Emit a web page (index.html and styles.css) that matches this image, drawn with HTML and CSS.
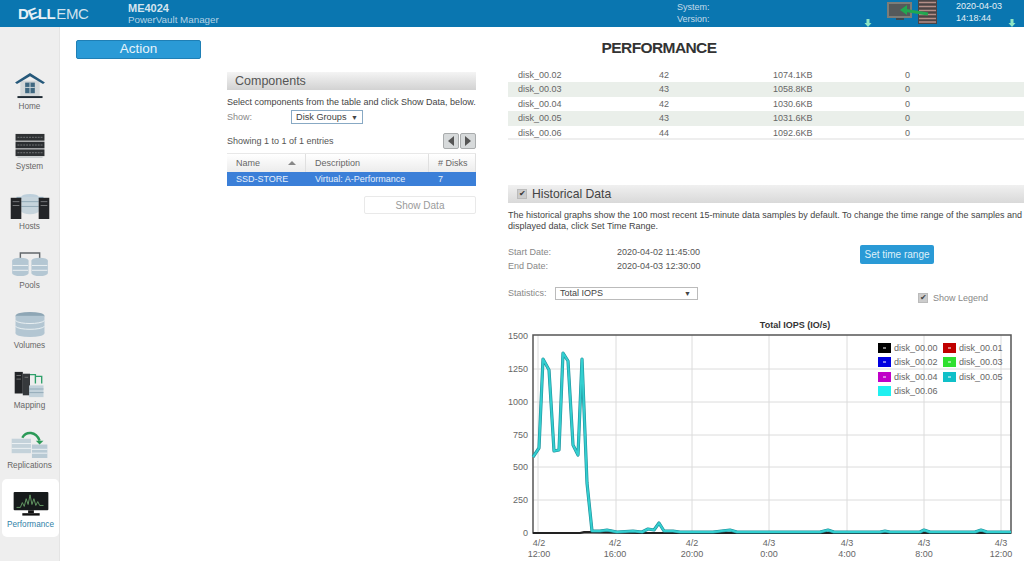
FILE: index.html
```html
<!DOCTYPE html>
<html lang="en">
<head>
<meta charset="utf-8">
<title>ME4024 PowerVault Manager</title>
<link rel="stylesheet" href="styles.css">
</head>
<body>
<header class="topbar">
  <div class="logo"><span class="logo-dell">D<span class="logo-e">E</span>LL</span><span class="logo-emc">EMC</span></div>
  <div class="product"><div class="product-name">ME4024</div><div class="product-sub">PowerVault Manager</div></div>
  <div class="sysinfo"><div>System:</div><div>Version:</div></div>
  <svg class="arrow arrow-a" viewBox="0 0 8 8"><path d="M2.500 0h3v4h2L4 8 .5 4h2z" fill="#8fe6c4"/></svg>
  <svg class="hw" viewBox="0 0 51 25">
    <rect x="0" y="2" width="25" height="16" fill="#7d7d78"/><rect x="2" y="4" width="21" height="12" fill="#55595a"/><rect x="9" y="18" width="8" height="2" fill="#3d4a52"/>
    <rect x="31" y="0" width="19" height="24" fill="#4d4444"/><path d="M32 2.500h17M32 6.500h17M32 10.500h17M32 14.500h17M32 18.500h17M32 22h17" stroke="#b58f88" stroke-width="1.300"/>
    <path d="M41 14 19 10.500" stroke="#22a850" stroke-width="3"/><path d="M20 5l-7 5 7 5z" fill="#22a850"/>
  </svg>
  <div class="clock"><div>2020-04-03</div><div>14:18:44</div></div>
  <svg class="arrow arrow-b" viewBox="0 0 8 8"><path d="M2.500 0h3v4h2L4 8 .5 4h2z" fill="#8fe6c4"/></svg>
</header>
<div class="page">
  <nav class="sidebar">
    <div class="nav-item">
      <svg class="nav-icon" viewBox="0 0 32 28"><rect x="6" y="9" width="20" height="17" fill="#d3d8d9"/><path d="M.5 11 16 1l15.500 10-2 1.500L16 4.500 2.500 12.500z" fill="#25587a"/><rect x="11" y="11" width="10" height="11" fill="#3f6880"/><path d="M16 11v11M11 16h10" stroke="#cfd8dc"/><rect x="3" y="25" width="26" height="2" fill="#1e2a33"/></svg>
      <span>Home</span>
    </div>
    <div class="nav-item">
      <svg class="nav-icon" viewBox="0 0 32 28"><rect x="1" y="2" width="30" height="7" fill="#2e3133"/><rect x="1" y="10" width="30" height="7" fill="#2a2d30"/><rect x="1" y="18" width="30" height="7" fill="#2e3133"/><path d="M3 5.500h26M3 13.500h26M3 21.500h26" stroke="#75787a" stroke-dasharray="2 1"/><rect x="3" y="25" width="26" height="2" fill="#c9cdcf"/></svg>
      <span>System</span>
    </div>
    <div class="nav-item">
      <svg class="nav-icon" viewBox="0 0 40 28"><path d="M6 6h28" stroke="#9fb7c7" stroke-width="2"/><ellipse cx="20" cy="5" rx="9" ry="3" fill="#bccfdb"/><rect x="11" y="5" width="18" height="15" fill="#c6d4dc"/><path d="M11 10h18M11 15h18" stroke="#8fa7b5"/><ellipse cx="20" cy="20" rx="9" ry="3" fill="#c6d4dc"/><rect x="0" y="6" width="11" height="22" fill="#232528"/><rect x="29" y="6" width="11" height="22" fill="#232528"/><path d="M2 10h7M31 10h7M2 14h7M31 14h7" stroke="#77797b"/></svg>
      <span>Hosts</span>
    </div>
    <div class="nav-item">
      <svg class="nav-icon" viewBox="0 0 38 28"><path d="M9 8V2h20v6" fill="none" stroke="#62676b" stroke-width="1.500"/><g fill="#b4c7d3"><ellipse cx="9" cy="10" rx="8.500" ry="3"/><rect x=".5" y="10" width="17" height="13"/><ellipse cx="9" cy="23" rx="8.500" ry="3"/><ellipse cx="29" cy="10" rx="8.500" ry="3"/><rect x="20.500" y="10" width="17" height="13"/><ellipse cx="29" cy="23" rx="8.500" ry="3"/></g><path d="M1 15h16M1 20h16M21 15h16M21 20h16" stroke="#edf2f4"/></svg>
      <span>Pools</span>
    </div>
    <div class="nav-item">
      <svg class="nav-icon" viewBox="0 0 34 28"><g fill="#b3c6d2"><ellipse cx="17" cy="5" rx="15" ry="4" fill="#8ea6b5"/><rect x="2" y="5" width="30" height="18"/><ellipse cx="17" cy="23" rx="15" ry="4"/></g><path d="M2 10c4 4 26 4 30 0M2 16c4 4 26 4 30 0" fill="none" stroke="#eaf0f3"/></svg>
      <span>Volumes</span>
    </div>
    <div class="nav-item">
      <svg class="nav-icon" viewBox="0 0 34 30"><rect x="0" y="1" width="9" height="24" fill="#222427"/><rect x="9" y="3" width="8" height="24" fill="#36393c"/><path d="M2 5h5M2 9h5M11 7h4" stroke="#777"/><rect x="16" y="16" width="16" height="13" fill="#c2d1da"/><path d="M16 20h16M16 24h16" stroke="#8fa7b5"/><path d="M17 4h6v10M23 6h7v8" fill="none" stroke="#2ea06a" stroke-width="1.500"/></svg>
      <span>Mapping</span>
    </div>
    <div class="nav-item">
      <svg class="nav-icon" viewBox="0 0 40 28"><rect x="1" y="8" width="20" height="15" fill="#c4d2da"/><path d="M1 13h20M1 18h20" stroke="#eef3f5"/><rect x="22" y="14" width="16" height="14" fill="#b9cad4"/><path d="M22 19h16M22 23h16" stroke="#eef3f5"/><path d="M12 7C16 0 26 0 30 10" fill="none" stroke="#2c9a58" stroke-width="2.500"/><path d="M26 10h8l-4 4z" fill="#2c9a58"/></svg>
      <span>Replications</span>
    </div>
    <div class="nav-item nav-active">
      <svg class="nav-icon" viewBox="0 0 36 28"><rect x="0" y="1" width="36" height="19" rx="1" fill="#161a1b"/><path d="M3 17h4l2-5 2 4 2-8 2 6 2-10 2 10 2-6 2 7 2-4 2 4h4" fill="none" stroke="#649a64"/><path d="M15 20h6v3h-6z" fill="#111"/><rect x="9" y="23" width="18" height="2.500" fill="#111"/></svg>
      <span>Performance</span>
    </div>
  </nav>
  <div class="action-col"><button class="btn-action">Action</button></div>
  <section class="components">
    <h2 class="section-head">Components</h2>
    <p class="hint">Select components from the table and click Show Data, below.</p>
    <div class="show-row"><span class="muted">Show:</span><span class="select-small">Disk Groups <i>▼</i></span></div>
    <div class="entries-row"><span>Showing 1 to 1 of 1 entries</span>
      <span class="pager"><span class="pager-btn"><b class="tri-l"></b></span><span class="pager-btn"><b class="tri-r"></b></span></span>
    </div>
    <div class="comp-table">
      <div class="comp-row comp-headrow"><span>Name<i class="sort"></i></span><span>Description</span><span># Disks</span></div>
      <div class="comp-row comp-sel"><span>SSD-STORE</span><span>Virtual: A-Performance</span><span>7</span></div>
    </div>
    <div class="show-wrap"><button class="btn-show">Show Data</button></div>
  </section>
  <main class="right">
    <h1 class="title">PERFORMANCE</h1>
    <div class="disk-table">
      <div class="disk-row"><span>disk_00.02</span><span>42</span><span>1074.1KB</span><span>0</span></div>
      <div class="disk-row alt"><span>disk_00.03</span><span>43</span><span>1058.8KB</span><span>0</span></div>
      <div class="disk-row"><span>disk_00.04</span><span>42</span><span>1030.6KB</span><span>0</span></div>
      <div class="disk-row alt"><span>disk_00.05</span><span>43</span><span>1031.6KB</span><span>0</span></div>
      <div class="disk-row"><span>disk_00.06</span><span>44</span><span>1092.6KB</span><span>0</span></div>
    </div>
    <h2 class="section-head hist-head"><span class="check">✔</span>Historical Data</h2>
    <p class="hist-text">The historical graphs show the 100 most recent 15-minute data samples by default. To change the time range of the samples and displayed data, click Set Time Range.</p>
    <div class="dates">
      <div class="date-grid">
        <span class="muted">Start Date:</span><span>2020-04-02 11:45:00</span>
        <span class="muted">End Date:</span><span>2020-04-03 12:30:00</span>
      </div>
      <button class="btn-range">Set time range</button>
    </div>
    <div class="stats">
      <span class="muted">Statistics:</span>
      <span class="select-wide">Total IOPS<i>▼</i></span>
      <span class="legend-toggle"><span class="check check-light">✔</span>Show Legend</span>
    </div>
    <svg class="chart" viewBox="500 318 524 243">
      <text x="795" y="328" class="chart-title">Total IOPS (IO/s)</text>
      <g class="grid">
        <path d="M533 369H1011M533 402H1011M533 435H1011M533 467H1011M533 500H1011"/>
        <path d="M538 335V533M616 335V533M692 335V533M769 335V533M847 335V533M924 335V533M1001 335V533"/>
      </g>
      <rect x="533" y="335" width="478" height="198" class="frame"/>
      <polyline class="line-dark" points="533,533 580,533 584,532 590,532 640,533 660,533 700,533 730,533 830,533 895,533 1011,533"/>
      <polyline class="line-under" points="533,457 539,448 543,359 549,370 554,451 559,450 563,353 568,361 573,445 578,455 582,359 587,483 592,531 600,531 607,530 617,532 633,531 642,532 648,529 654,530 659,523 664,531 673,531 680,532 713,532 730,530 737,532 760,532 820,532 828,530 834,532 880,532 885,531 890,532 920,532 924,530 930,532 975,532 981,530 987,532 1011,532"/>
      <polyline class="line-teal" points="533,457 539,448 543,359 549,370 554,451 559,450 563,353 568,361 573,445 578,455 582,359 587,483 592,531 600,531 607,530 617,532 633,531 642,532 648,529 654,530 659,523 664,531 673,531 680,532 713,532 730,530 737,532 760,532 820,532 828,530 834,532 880,532 885,531 890,532 920,532 924,530 930,532 975,532 981,530 987,532 1011,532"/>
      <g class="axis-y">
        <text x="528" y="339">1500</text><text x="528" y="372">1250</text><text x="528" y="405">1000</text><text x="528" y="438">750</text><text x="528" y="470">500</text><text x="528" y="503">250</text><text x="528" y="536">0</text>
      </g>
      <g class="axis-x">
        <text x="539" y="546">4/2</text><text x="539" y="557">12:00</text>
        <text x="615" y="546">4/2</text><text x="615" y="557">16:00</text>
        <text x="692" y="546">4/2</text><text x="692" y="557">20:00</text>
        <text x="769" y="546">4/3</text><text x="769" y="557">0:00</text>
        <text x="847" y="546">4/3</text><text x="847" y="557">4:00</text>
        <text x="924" y="546">4/3</text><text x="924" y="557">8:00</text>
        <text x="1001" y="546">4/3</text><text x="1001" y="557">12:00</text>
      </g>
      <g class="legend">
        <rect x="878" y="343" width="13" height="10" fill="#000"/><text x="894" y="351">disk_00.00</text>
        <rect x="943" y="343" width="13" height="10" fill="#c00000"/><text x="959" y="351">disk_00.01</text>
        <rect x="878" y="357" width="13" height="10" fill="#0000e0"/><text x="894" y="365">disk_00.02</text>
        <rect x="943" y="357" width="13" height="10" fill="#2fe02f"/><text x="959" y="365">disk_00.03</text>
        <rect x="878" y="372" width="13" height="10" fill="#c000c8"/><text x="894" y="380">disk_00.04</text>
        <rect x="943" y="372" width="13" height="10" fill="#10c0c8"/><text x="959" y="380">disk_00.05</text>
        <rect x="878" y="386" width="13" height="10" fill="#20f0f0"/><text x="894" y="394">disk_00.06</text>
      </g>
      <path class="legend-dash" d="M883 348h3M948 348h3M883 362h3M948 362h3M883 377h3M948 377h3"/>
    </svg>
  </main>
</div>
</body>
</html>
```
FILE: styles.css
```css
* { box-sizing: border-box; }
html, body { margin: 0; height: 561px; overflow: hidden; }
body { font-family: "Liberation Sans", Arial, sans-serif; font-size: 9px; color: #444; background: #fff; }
h1, h2, p { margin: 0; font-weight: normal; }
button { font-family: inherit; }

.topbar { position: relative; height: 27px; background: #0a76b0; color: #dbe9f2; display: flex; align-items: flex-start; }
.logo { width: 128px; padding: 5px 0 0 18px; font-size: 15px; line-height: 17px; white-space: nowrap; color: #cfe2ee; }
.logo-dell { font-weight: bold; letter-spacing: -0.5px; color: #e6f0f6; }
.logo-e { display: inline-block; transform: rotate(-22deg); }
.logo-emc { font-weight: normal; letter-spacing: -0.3px; margin-left: 1px; }
.product { width: 549px; padding-top: 2px; }
.product-name { font-size: 11px; line-height: 12px; font-weight: bold; color: #d5e4ee; }
.product-sub { font-size: 9.800px; line-height: 12px; color: #b4d2e4; }
.sysinfo { width: 187px; padding-top: 2px; font-size: 9px; line-height: 11.500px; color: #c4dbe9; }
.hw { width: 51px; height: 25px; margin: 0 0 0 23px; flex: none; filter: blur(0.4px); }
.clock { margin-left: 18px; font-size: 9px; line-height: 12px; color: #e5f0f6; width: 50px; }
.arrow { position: absolute; width: 8px; height: 8px; top: 19px; }
.arrow-a { left: 864px; }
.arrow-b { left: 1008px; }

.page { display: flex; height: 534px; }
.sidebar { width: 60px; background: #eeeeee; flex: none; border-right: 1px solid #e4e4e4; padding-top: 45px; }
.nav-item { height: 59.800px; display: flex; flex-direction: column; align-items: center; font-size: 8.200px; line-height: 10px; color: #666; }
.nav-icon { height: 27px; width: 42px; margin-bottom: 3px; display: block; flex: none; filter: blur(0.4px); }
.nav-active { background: #fff; color: #2f7fa8; width: 57px; height: 58px; margin: -12px 0 0 2px; padding-top: 12px; border-radius: 5px; }
.nav-active .nav-icon { margin-bottom: 2px; }

.action-col { width: 167px; flex: none; padding: 13px 0 0 16px; }
.btn-action { width: 125px; height: 19px; padding: 0 0 2px; background: #2a9ad6; border: 1px solid #1f7fb5; border-radius: 2px; color: #e6f3fa; font-size: 13.500px; line-height: 15px; }

.components { width: 249px; flex: none; padding-top: 45px; margin-right: 32px; }
.section-head { height: 18px; background: linear-gradient(#f4f4f4, #d2d2d2); font-size: 12.500px; line-height: 18px; padding-left: 8px; color: #555; }
.hint { margin-top: 7px; font-size: 9px; line-height: 11px; white-space: nowrap; color: #444; }
.show-row { display: flex; align-items: center; height: 14px; margin-top: 2px; }
.show-row .muted { width: 64px; }
.muted { color: #888; }
.select-small { width: 72px; height: 14px; border: 1px solid #88a9c4; padding-left: 4px; font-size: 9.200px; line-height: 12px; color: #444; background: #fff; white-space: nowrap; }
.select-small i { font-style: normal; font-size: 7px; margin-left: 2px; }
.entries-row { display: flex; justify-content: space-between; align-items: center; margin-top: 8px; height: 17px; color: #555; }
.pager { display: flex; gap: 1px; }
.pager-btn { width: 16px; height: 16px; background: #d7dadb; border: 1px solid #a9acad; border-radius: 2px; display: flex; align-items: center; justify-content: center; }
.tri-l { border-right: 6px solid #555; border-top: 5px solid transparent; border-bottom: 5px solid transparent; }
.tri-r { border-left: 6px solid #555; border-top: 5px solid transparent; border-bottom: 5px solid transparent; }
.comp-table { margin-top: 4px; }
.comp-row { display: grid; grid-template-columns: 79px 123px 47px; align-items: center; }
.comp-row span { padding-left: 9px; }
.comp-headrow { height: 19px; background: linear-gradient(#fff, #ececec); color: #666; border-top: 1px solid #e8e8e8; }
.comp-headrow span { position: relative; height: 100%; line-height: 18px; border-right: 1px solid #e0e0e0; }
.sort { position: absolute; right: 9px; top: 7px; border-bottom: 4px solid #888; border-left: 4px solid transparent; border-right: 4px solid transparent; }
.comp-sel { height: 14px; background: #3b7fd8; color: #e6effa; }
.show-wrap { display: flex; justify-content: flex-end; margin-top: 10px; }
.btn-show { width: 112px; height: 18px; background: #fff; border: 1px solid #e9e9e9; border-radius: 2px; color: #9a9a9a; font-size: 10px; padding: 0; }

.right { flex: 1; min-width: 0; }
.title { width: 302px; height: 41px; padding-top: 13px; text-align: center; font-size: 15.500px; line-height: 16px; font-weight: bold; letter-spacing: -0.6px; color: #333; white-space: nowrap; }
.disk-table { border-bottom: 2px solid #eee; height: 72px; }
.disk-row { display: grid; grid-template-columns: 141px 114px 132px 1fr; height: 14.400px; line-height: 14px; padding-left: 10px; color: #666; }
.disk-row.alt { background: #eaefea; }
.hist-head { margin-top: 45px; height: 18px; padding-left: 9px; font-size: 12.200px; color: #444; background: linear-gradient(#f0f0f0, #d9d9d9); display: flex; align-items: center; }
.check { width: 10px; height: 10px; background: #ccc; border: 1px solid #bbb; color: #333; font-size: 8px; line-height: 8px; text-align: center; margin-right: 5px; flex: none; }
.check-light { color: #444; }
.hist-text { margin-top: 7px; font-size: 9px; line-height: 10.500px; width: 530px; color: #444; }
.dates { display: flex; margin-top: 12px; }
.date-grid { width: 352px; display: grid; grid-template-columns: 109px 1fr; grid-auto-rows: 14px; line-height: 14px; color: #555; padding-top: 2px; }
.btn-range { width: 74px; height: 19px; margin-top: 2px; padding: 0; background: #2a9ad6; border: 0; border-radius: 2px; color: #dff0f9; font-size: 10px; }
.stats { display: flex; align-items: center; margin-top: 12px; height: 16px; }
.stats .muted { width: 47px; }
.select-wide { width: 143px; height: 13px; border: 1px solid #bbb; padding: 0 6px 0 4px; line-height: 11px; color: #444; display: flex; justify-content: space-between; }
.select-wide i { font-style: normal; font-size: 7px; }
.legend-toggle { display: flex; align-items: center; margin-left: 220px; margin-top: 9px; color: #888; white-space: nowrap; }
.legend-toggle .check { margin-right: 5px; }

.chart { display: block; width: 524px; height: 243px; margin: 17px 0 0 -8px; }
.chart text { font-family: "Liberation Sans", Arial, sans-serif; }
.chart-title { font-size: 9px; font-weight: bold; fill: #333; text-anchor: middle; }
.grid path { stroke: #dcdcdc; stroke-width: 1; fill: none; }
.frame { fill: none; stroke: #555; stroke-width: 1.500; }
.line-dark { fill: none; stroke: #222; stroke-width: 2; }
.line-under { fill: none; stroke: #1f8f9a; stroke-width: 3.200; stroke-linejoin: round; }
.line-teal { fill: none; stroke: #33cfd0; stroke-width: 2; stroke-linejoin: round; }
.axis-y text { font-size: 9px; fill: #666; text-anchor: end; }
.axis-x text { font-size: 9px; fill: #666; text-anchor: middle; }
.legend text { font-size: 9px; fill: #666; }
.legend-dash { stroke: #fff; stroke-width: 1; fill: none; }
```
